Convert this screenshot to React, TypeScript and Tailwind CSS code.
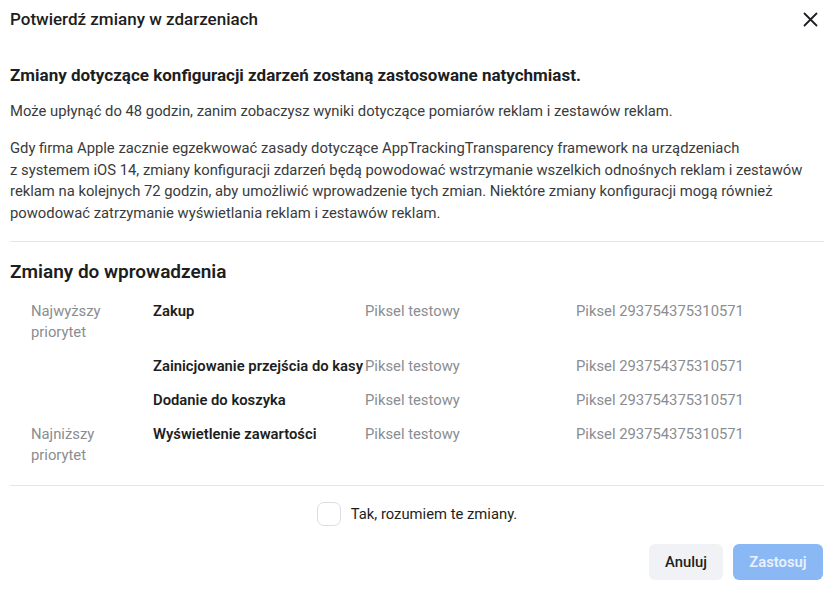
import React, { useState } from "react";

const ROWS = [
  { priority: "Najwyższy priorytet", event: "Zakup" },
  { priority: "", event: "Zainicjowanie przejścia do kasy" },
  { priority: "", event: "Dodanie do koszyka" },
  { priority: "Najniższy priorytet", event: "Wyświetlenie zawartości" },
];

export default function App() {
  const [checked, setChecked] = useState(false);

  return (
    <div className="w-[834px] h-[592px] bg-white text-[#1c1e21] font-['Roboto',sans-serif] overflow-hidden">
      {/* nagłówek */}
      <div className="flex items-center justify-between pl-[10px] pr-[16px] pt-[8px] h-[30px]">
        <span className="text-[17px] font-medium leading-[20px]">Potwierdź zmiany w zdarzeniach</span>
        <button className="w-[16px] h-[16px] flex items-center justify-center text-[#1c1e21]">
          <svg width="15" height="15" viewBox="0 0 15 15" fill="none" stroke="currentColor" strokeWidth="1.8" strokeLinecap="round">
            <path d="M1.5 1.5 L13.5 13.5 M13.5 1.5 L1.5 13.5" />
          </svg>
        </button>
      </div>

      <div className="px-[10px]">
        <h2 className="mt-[35px] text-[17px] font-bold leading-[20px]">
          Zmiany dotyczące konfiguracji zdarzeń zostaną zastosowane natychmiast.
        </h2>
        <p className="mt-[16px] text-[14.8px] leading-[20px] text-[#3a3b3c]">
          Może upłynąć do 48 godzin, zanim zobaczysz wyniki dotyczące pomiarów reklam i zestawów reklam.
        </p>
        <p className="mt-[17px] w-[800px] text-[14.8px] leading-[21.7px] text-[#3a3b3c]">
          Gdy firma Apple zacznie egzekwować zasady dotyczące AppTrackingTransparency framework na urządzeniach
          <br />
          z systemem iOS 14, zmiany konfiguracji zdarzeń będą powodować wstrzymanie wszelkich odnośnych reklam i zestawów
          reklam na kolejnych 72 godzin, aby umożliwić wprowadzenie tych zmian. Niektóre zmiany konfiguracji mogą również
          powodować zatrzymanie wyświetlania reklam i zestawów reklam.
        </p>

        <div className="mt-[16px] h-px bg-[#e4e6eb]" />

        <h3 className="mt-[19px] text-[19px] font-semibold leading-[22px]">Zmiany do wprowadzenia</h3>

        {/* tabela zmian */}
        <div className="mt-[18px] pl-[21px] flex flex-col gap-[13px] text-[14.8px] leading-[21px]">
          {ROWS.map((r, i) => (
            <div key={i} className="grid grid-cols-[122px_212px_211px_1fr]">
              <div className="text-[#8a8d91] w-[70px]">{r.priority}</div>
              <div className="font-semibold text-[#1c1e21] whitespace-nowrap">{r.event}</div>
              <div className="text-[#8a8d91]">Piksel testowy</div>
              <div className="text-[#8a8d91]">Piksel 293754375310571</div>
            </div>
          ))}
        </div>

        <div className="mt-[19px] h-px bg-[#e4e6eb]" />

        {/* potwierdzenie */}
        <label className="mt-[16px] flex items-center justify-center gap-[10px] cursor-pointer">
          <span
            onClick={() => setChecked(!checked)}
            className="w-[24px] h-[24px] rounded-[7px] border border-[#dadde1] bg-white"
          />
          <span className="text-[14.8px] text-[#1c1e21]">Tak, rozumiem te zmiany.</span>
        </label>

        <div className="mt-[18px] flex justify-end gap-[10px] pr-[1px]">
          <button className="w-[74px] h-[36px] rounded-[6px] bg-[#f0f2f5] text-[14.8px] font-medium text-[#1c1e21]">
            Anuluj
          </button>
          <button
            disabled={!checked}
            className="w-[90px] h-[36px] rounded-[6px] bg-[#8ab8f5] text-[14.8px] font-semibold text-[#e8f1fd]"
          >
            Zastosuj
          </button>
        </div>
      </div>
    </div>
  );
}
